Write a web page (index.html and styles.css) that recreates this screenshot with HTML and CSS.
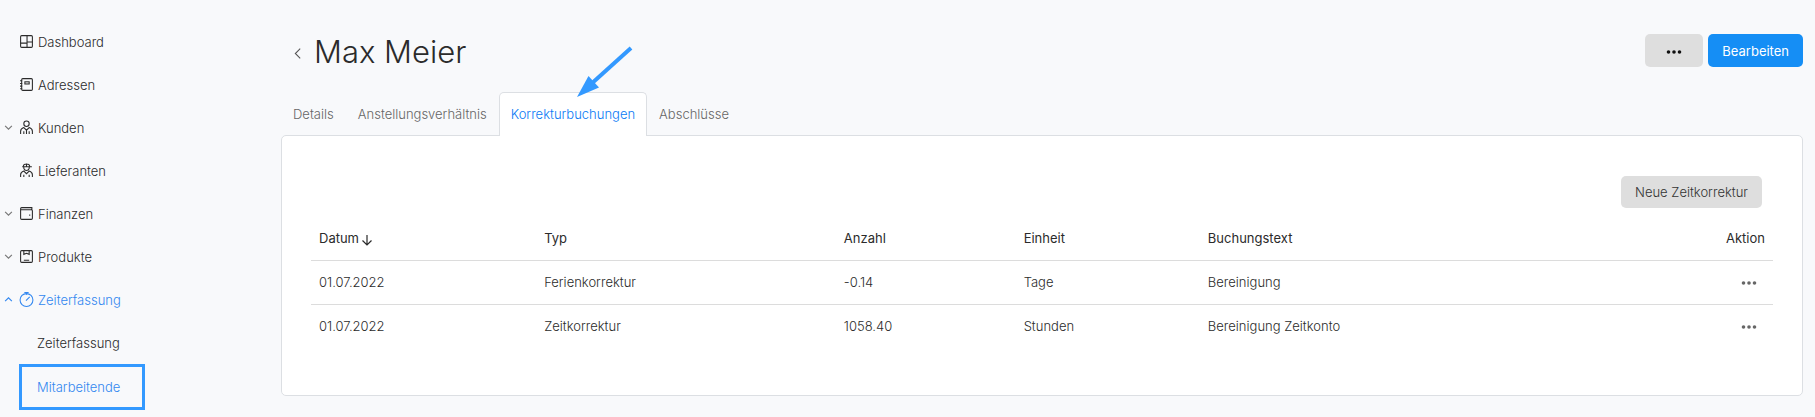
FILE: index.html
```html
<!DOCTYPE html>
<html lang="de">
<head>
    <meta charset="UTF-8">
    <meta name="viewport" content="width=device-width, initial-scale=1.0">
    <title>Max Meier</title>
    <link rel="stylesheet" href="styles.css">
</head>
<body>
    <nav class="sidebar">
        <a class="nav-item" href="#">
            <span class="chevron"></span>
            <svg class="icon" viewBox="0 0 14 14"><rect x="1.5" y="1.5" width="11" height="11" rx="1"/><path d="M7.500 1.5v11M1.5 8.500h6M7.500 7.500h5"/></svg>
            Dashboard
        </a>
        <a class="nav-item" href="#">
            <span class="chevron"></span>
            <svg class="icon" viewBox="0 0 14 14"><rect x="2.5" y="1.500" width="10" height="11" rx="1"/><rect x="5.5" y="4.5" width="4" height="2"/><path d="M1 3.5h2M1 6h2M1 8.500h2M1 11h2"/></svg>
            Adressen
        </a>
        <a class="nav-item" href="#">
            <svg class="chevron" viewBox="0 0 8 8"><path d="M1 2.500l3 3 3-3"/></svg>
            <svg class="icon" viewBox="0 0 14 14"><circle cx="7" cy="3.500" r="2.500"/><path d="M1.500 13v-2.500q0-2.500 3-3.500L7 9.500 9.500 7q3 1 3 3.500V13M4.500 13v-2.500M9.500 13v-2.500M7 9.500V13"/></svg>
            Kunden
        </a>
        <a class="nav-item" href="#">
            <span class="chevron"></span>
            <svg class="icon" viewBox="0 0 14 14"><path d="M4 3.500q0-2.500 3-2.500t3 2.500M3 3.500h9M4.500 3.500v1.500q.5 2 2.500 2t2.500-2V3.500M7 .5v3M1.500 13v-2q0-2.500 3-3.500L7 10l2.500-2.500q3 1 3 3.500v2M4.500 13v-2M9.500 13v-2"/></svg>
            Lieferanten
        </a>
        <a class="nav-item" href="#">
            <svg class="chevron" viewBox="0 0 8 8"><path d="M1 2.500l3 3 3-3"/></svg>
            <svg class="icon" viewBox="0 0 14 14"><path d="M12 3.500V1.500H2.500q-1 0-1 1v9q0 1 1 1h9q1 0 1-1v-7q0-1-1-1h-10M9.500 8.500h1"/></svg>
            Finanzen
        </a>
        <a class="nav-item" href="#">
            <svg class="chevron" viewBox="0 0 8 8"><path d="M1 2.500l3 3 3-3"/></svg>
            <svg class="icon" viewBox="0 0 14 14"><rect x="1.500" y="1.500" width="11" height="11" rx="1"/><path d="M4.500 1.500v3.500L7 4l2.500 1V1.500M4.500 10.500h5"/></svg>
            Produkte
        </a>
        <a class="nav-item active" href="#">
            <svg class="chevron" viewBox="0 0 8 8"><path d="M1 5.500l3-3 3 3"/></svg>
            <svg class="icon" viewBox="0 0 14 14"><circle cx="7" cy="7.500" r="6"/><path d="M5 .5h4M7 .5v2M6.500 8L10 4.500"/></svg>
            Zeiterfassung
        </a>
        <a class="nav-sub" href="#">Zeiterfassung</a>
        <a class="nav-sub active highlight" href="#">Mitarbeitende</a>
    </nav>

    <main class="content">
        <header class="page-header">
            <a class="back" href="#" aria-label="Zurück">
                <svg viewBox="0 0 8 12"><path d="M6.500 1.500L2 6l4.500 4.500"/></svg>
            </a>
            <h1>Max Meier</h1>
            <button class="btn btn-more" type="button" aria-label="Mehr">
                <svg class="dots" viewBox="0 0 16 4"><circle cx="2.500" cy="2" r="1.800"/><circle cx="8" cy="2" r="1.800"/><circle cx="13.500" cy="2" r="1.800"/></svg>
            </button>
            <button class="btn btn-primary" type="button">Bearbeiten</button>
        </header>

        <div class="tabs">
            <a class="tab" href="#">Details</a>
            <a class="tab" href="#">Anstellungsverhältnis</a>
            <a class="tab current" href="#">Korrekturbuchungen
                <svg class="pointer" viewBox="0 0 58 54"><path class="shaft" d="M56 3L15 40"/><path class="head" d="M2 52L13.500 31 24 42.500z"/></svg>
            </a>
            <a class="tab" href="#">Abschlüsse</a>
        </div>

        <section class="panel">
            <div class="toolbar">
                <button class="btn btn-new" type="button">Neue Zeitkorrektur</button>
            </div>
            <table class="bookings">
                <thead>
                    <tr>
                        <th class="col-date">Datum <svg class="sort" viewBox="0 0 12 12"><path d="M6 1v10M1.500 6.500L6 11l4.500-4.500"/></svg></th>
                        <th class="col-type">Typ</th>
                        <th class="col-amount">Anzahl</th>
                        <th class="col-unit">Einheit</th>
                        <th>Buchungstext</th>
                        <th class="col-action">Aktion</th>
                    </tr>
                </thead>
                <tbody>
                    <tr>
                        <td>01.07.2022</td>
                        <td>Ferienkorrektur</td>
                        <td>-0.14</td>
                        <td>Tage</td>
                        <td>Bereinigung</td>
                        <td class="col-action">
                            <button class="row-menu" type="button" aria-label="Aktion"><svg class="dots" viewBox="0 0 16 4"><circle cx="2.500" cy="2" r="1.800"/><circle cx="8" cy="2" r="1.800"/><circle cx="13.500" cy="2" r="1.800"/></svg></button>
                        </td>
                    </tr>
                    <tr>
                        <td>01.07.2022</td>
                        <td>Zeitkorrektur</td>
                        <td>1058.40</td>
                        <td>Stunden</td>
                        <td>Bereinigung Zeitkonto</td>
                        <td class="col-action">
                            <button class="row-menu" type="button" aria-label="Aktion"><svg class="dots" viewBox="0 0 16 4"><circle cx="2.500" cy="2" r="1.800"/><circle cx="8" cy="2" r="1.800"/><circle cx="13.500" cy="2" r="1.800"/></svg></button>
                        </td>
                    </tr>
                </tbody>
            </table>
        </section>
    </main>
</body>
</html>
```
FILE: styles.css
```css
* {
    box-sizing: border-box;
}
body {
    margin: 0;
    display: flex;
    align-items: flex-start;
    background: #f8f9fb;
    color: #2b2b2b;
    font-family: Inter, sans-serif;
    font-size: 13px;
    font-weight: 300;
    line-height: 20px;
}
a {
    color: inherit;
    text-decoration: none;
}
svg {
    fill: none;
    stroke: currentColor;
}

/* Sidebar */
.sidebar {
    width: 281px;
    flex-shrink: 0;
    padding-top: 20px;
}
.nav-item {
    display: flex;
    align-items: center;
    height: 43px;
    padding-left: 4px;
}
.chevron {
    width: 9px;
    height: 9px;
    margin-right: 6px;
    color: #777;
}
.icon {
    width: 15px;
    height: 15px;
    margin-right: 4px;
}
.nav-sub {
    display: flex;
    align-items: center;
    height: 43px;
    padding-left: 37px;
}
.active,
.active .chevron {
    color: #3388f0;
}
.highlight {
    width: 126px;
    height: 46px;
    margin-left: 19px;
    padding-left: 15px;
    border: 3px solid #3399ff;
}

/* Page header */
.content {
    flex: 1;
    padding: 34px 12px 0 0;
}
.page-header {
    display: flex;
    align-items: flex-start;
}
.back {
    display: flex;
    align-items: center;
    height: 38px;
    padding-left: 12px;
    color: #555;
}
.back svg {
    width: 9px;
    height: 13px;
}
h1 {
    flex: 1;
    margin: 0 0 0 12px;
    font-size: 31px;
    font-weight: 300;
    line-height: 36px;
}
.btn {
    height: 33px;
    padding: 0 14px;
    border: none;
    border-radius: 5px;
    background: #dedede;
    color: #333;
    font: inherit;
}
.btn-more {
    width: 58px;
    margin-right: 5px;
    color: #111;
}
.btn-primary {
    background: #158ef5;
    color: #fff;
    font-weight: 400;
}
.dots {
    width: 16px;
    height: 4px;
    fill: currentColor;
    stroke: none;
    vertical-align: middle;
}

/* Tabs */
.tabs {
    display: flex;
    margin-top: 20px;
}
.tab {
    height: 43px;
    padding: 11px 11px 0;
    border: 1px solid transparent;
    border-bottom: none;
    color: #666;
}
.current {
    position: relative;
    height: 44px;
    margin-bottom: -1px;
    background: #fff;
    border-color: #dcdfe3;
    border-radius: 5px 5px 0 0;
    color: #0a7af5;
}
/* Arrow that points at the current tab */
.pointer {
    position: absolute;
    top: -48px;
    left: 75px;
    width: 58px;
    height: 54px;
}
.shaft {
    stroke: #3399ff;
    stroke-width: 4;
}
.head {
    fill: #3399ff;
    stroke: none;
}

/* Bookings */
.panel {
    padding: 40px 29px 47px;
    background: #fff;
    border: 1px solid #dcdfe3;
    border-radius: 5px;
}
.toolbar {
    display: flex;
    justify-content: flex-end;
    padding-right: 11px;
    margin-bottom: 8px;
}
.btn-new {
    height: 32px;
}
.bookings {
    width: 100%;
    border-collapse: collapse;
    table-layout: fixed;
}
th,
td {
    height: 44px;
    padding: 0 8px;
    text-align: left;
}
th {
    font-weight: 400;
}
tr + tr td,
thead th {
    border: 0 solid #dcdcdc;
}
thead th {
    border-bottom-width: 1px;
}
tr + tr td {
    border-top-width: 1px;
}
.sort {
    width: 12px;
    height: 12px;
    margin-left: -2px;
    stroke-width: 1.2;
    vertical-align: -3px;
}
.col-date {
    width: 15.4%;
}
.col-type {
    width: 20.5%;
}
.col-amount {
    width: 12.3%;
}
.col-unit {
    width: 12.6%;
}
.col-action {
    text-align: right;
}
.row-menu {
    width: 32px;
    height: 24px;
    padding: 0;
    border: none;
    background: none;
    color: #666;
}
```
